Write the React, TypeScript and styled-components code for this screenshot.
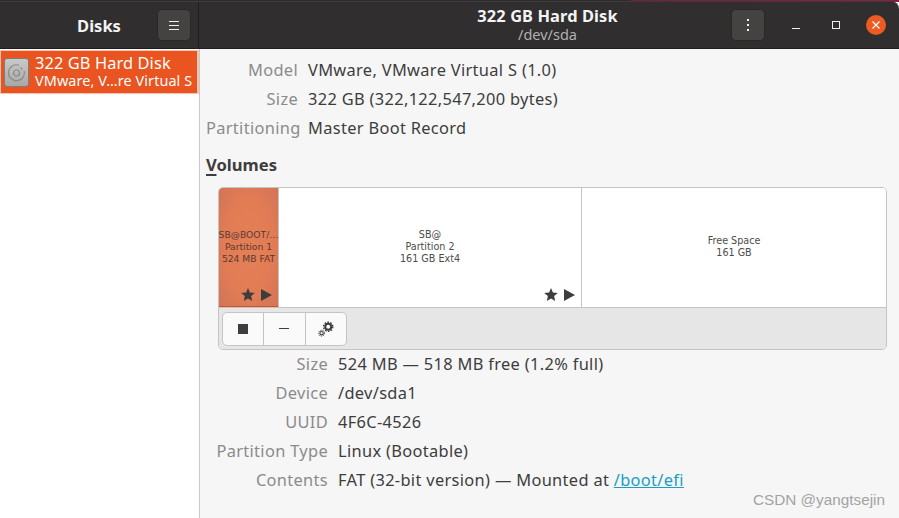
import React from "react";
import styled, { createGlobalStyle } from "styled-components";

const Global = createGlobalStyle`
  html, body {
    margin: 0;
    padding: 0;
    width: 899px;
    height: 518px;
    overflow: hidden;
    background: #f6f6f6;
    font-family: "Noto Sans", "Open Sans", sans-serif;
  }
`;

const Window = styled.div`
  position: relative;
  width: 899px;
  height: 518px;
  display: flex;
  flex-direction: column;
  background: #f6f6f6;
  overflow: hidden;
`;

const Strip = styled.div`
  height: 2px;
  background: linear-gradient(90deg, #2d2b2b 0, #2d2b2b 630px, #7a1c3d 632px, #8d1e45 100%);
  flex: none;
`;

const HeaderBar = styled.div`
  height: 46px;
  flex: none;
  display: flex;
  background: #302e2e;
  border-top: 1px solid #3c3a3a;
  border-radius: 0 8px 0 0;
  margin-top: -1px;
  border-bottom: 1px solid #1f1e1e;
  box-sizing: content-box;
`;

const SideHead = styled.div`
  width: 199px;
  flex: none;
  display: grid;
  grid-template-columns: 1fr auto 1fr;
  align-items: center;
  padding: 0 7px 0 0;
  box-sizing: border-box;
  border-right: 1px solid #1f1e1e;
`;

const SideTitle = styled.div`
  grid-column: 2;
  padding-left: 7px;
  color: #f4f4f4;
  font-size: 16.5px;
  font-weight: 700;
`;

const SideActions = styled.div`
  grid-column: 3;
  display: flex;
  justify-content: flex-end;
`;

const MainHead = styled.div`
  flex: 1;
  display: grid;
  grid-template-columns: 1fr auto 1fr;
  align-items: center;
  padding-right: 3px;
`;

const TitleBlock = styled.div`
  grid-column: 2;
  display: flex;
  flex-direction: column;
  align-items: center;
  line-height: 18px;
`;

const TitleMain = styled.div`
  color: #f4f4f4;
  font-size: 16.4px;
  font-weight: 700;
  letter-spacing: 0.1px;
`;

const TitleSub = styled.div`
  color: #b2b1b0;
  font-size: 14.5px;
`;

const MainActions = styled.div`
  grid-column: 3;
  display: flex;
  align-items: center;
  justify-content: flex-end;
`;

const HeadButton = styled.div`
  width: 34px;
  height: 32px;
  display: flex;
  align-items: center;
  justify-content: center;
  background: #454342;
  border: 1px solid #292828;
  border-radius: 5px;
  box-sizing: border-box;
`;

const WinControls = styled.div`
  display: flex;
  align-items: center;
  margin-left: 11px;
`;

const WinButton = styled.div`
  width: 40px;
  height: 24px;
  display: flex;
  align-items: center;
  justify-content: center;
`;

const CloseCircle = styled.div`
  width: 20px;
  height: 20px;
  border-radius: 50%;
  background: #ed5a24;
  display: flex;
  align-items: center;
  justify-content: center;
`;

const Body = styled.div`
  flex: 1;
  display: flex;
  min-height: 0;
`;

const Sidebar = styled.div`
  width: 200px;
  flex: none;
  background: #ffffff;
  border-right: 1px solid #c8c8c8;
  box-sizing: border-box;
`;

const DiskRow = styled.div`
  height: 44px;
  margin-top: 1px;
  box-sizing: border-box;
  background: #e95420;
  border: 1px solid #f6c4b0;
  border-width: 1px 2px 1px 1px;
  display: flex;
  align-items: center;
  padding-left: 3px;
  gap: 6px;
  color: #ffffff;
`;

const DiskIcon = styled.div`
  width: 25px;
  height: 29px;
  flex: none;
  display: flex;
  align-items: center;
  justify-content: center;
  background: linear-gradient(#c9c9c7, #a8a8a6);
  border: 1px solid #7d7d7b;
  border-radius: 3px;
  box-sizing: border-box;
`;

const DiskText = styled.div`
  display: flex;
  flex-direction: column;
  min-width: 0;
  padding-bottom: 1px;
`;

const DiskName = styled.div`
  font-size: 16.4px;
  letter-spacing: 0.1px;
  line-height: 20px;
  white-space: nowrap;
`;

const DiskSub = styled.div`
  margin-top: -1px;
  font-size: 14.4px;
  letter-spacing: 0.1px;
  line-height: 18px;
  white-space: nowrap;
`;

const Main = styled.div`
  flex: 1;
  min-width: 0;
  display: flex;
  flex-direction: column;
  padding: 6px 12px 0 6px;
`;

const InfoGrid = styled.div<{ $labelWidth: number }>`
  display: grid;
  grid-template-columns: ${(p) => p.$labelWidth}px 1fr;
  column-gap: 10px;
  grid-auto-rows: 29px;
  align-items: center;
  font-size: 16.4px;
  letter-spacing: 0.33px;
`;

const Label = styled.div`
  text-align: right;
  color: #8b8b8b;
  white-space: nowrap;
`;

const Value = styled.div`
  color: #3d3d3d;
  white-space: nowrap;
`;

const FileLink = styled.a`
  color: #17a0c4;
  text-decoration: underline;
`;

const Heading = styled.div`
  margin-top: 11px;
  height: 24px;
  line-height: 24px;
  font-size: 16.6px;
  font-weight: 700;
  color: #3d3d3d;
  u {
    text-decoration-thickness: 2px;
    text-underline-offset: 3px;
  }
`;

const VolumesBox = styled.div`
  margin: 10px 0 0 12px;
  height: 163px;
  flex: none;
  display: flex;
  flex-direction: column;
  box-sizing: border-box;
  border: 1px solid #c4c4c4;
  border-radius: 5px;
  background: #ffffff;
  overflow: hidden;
`;

const Bars = styled.div`
  height: 119px;
  flex: none;
  display: flex;
  border-bottom: 1px solid #c4c4c4;
  box-sizing: content-box;
`;

const Part = styled.div<{ $width: number; $selected?: boolean }>`
  position: relative;
  width: ${(p) => p.$width}px;
  flex: ${(p) => (p.$width ? "none" : "1")};
  box-sizing: border-box;
  display: flex;
  flex-direction: column;
  align-items: center;
  justify-content: center;
  text-align: center;
  border-right: ${(p) => (p.$width ? "1px solid #c4c4c4" : "none")};
  font-family: "DejaVu Sans", sans-serif;
  font-size: ${(p) => (p.$selected ? 9.2 : 9.6)}px;
  line-height: 12px;
  color: ${(p) => (p.$selected ? "#5a3a30" : "#4c4c4c")};
  background: ${(p) =>
    p.$selected
      ? "radial-gradient(ellipse at center, #e57f58 0%, #e27c55 55%, #d27456 100%)"
      : "#ffffff"};
  box-shadow: ${(p) => (p.$selected ? "inset 0 -1px 0 #d9501f" : "none")};
  overflow: hidden;
  white-space: nowrap;
`;

const PartLabel = styled.div`
  margin-top: -2px;
`;

const PartMarks = styled.div`
  position: absolute;
  right: 6px;
  bottom: 6px;
  display: flex;
  align-items: center;
  gap: 6px;
`;

const ToolStrip = styled.div`
  flex: 1;
  display: flex;
  align-items: center;
  padding-left: 3px;
  background: #e6e6e6;
`;

const ToolGroup = styled.div`
  display: flex;
  width: 125px;
  height: 34px;
  box-sizing: border-box;
  border: 1px solid #c4c4c4;
  border-radius: 5px;
  background: #fafafa;
  overflow: hidden;
`;

const ToolButton = styled.div`
  flex: 1;
  display: flex;
  align-items: center;
  justify-content: center;
  box-sizing: border-box;
  & + & {
    border-left: 1px solid #c4c4c4;
  }
`;

const Details = styled.div`
  margin-top: -1px;
`;

const Watermark = styled.div`
  position: absolute;
  right: 14px;
  bottom: 9px;
  font-family: "Liberation Sans", sans-serif;
  font-size: 15.3px;
  color: #a3a3a3;
`;

const Star = () => (
  <svg width="14" height="13" viewBox="0 0 14 13">
    <path d="M7 0l1.9 4.5 4.9.4-3.7 3.2 1.1 4.8L7 10.4 2.8 12.9l1.1-4.8L.2 4.9l4.9-.4z" fill="#3d3d3d" />
  </svg>
);

const Play = () => (
  <svg width="11" height="12" viewBox="0 0 11 12">
    <path d="M0 0l11 6-11 6z" fill="#3d3d3d" />
  </svg>
);

const Marks = () => (
  <PartMarks>
    <Star />
    <Play />
  </PartMarks>
);

const Gears = () => (
  <svg width="16" height="16" viewBox="0 0 16 16" fill="none" stroke="#3d3d3d">
    <circle cx="10.2" cy="5.8" r="3" strokeWidth="2" />
    <circle cx="10.2" cy="5.8" r="4.6" strokeWidth="1.4" strokeDasharray="1.6 1.3" />
    <circle cx="3.6" cy="12.2" r="1.7" strokeWidth="1.1" />
    <circle cx="3.6" cy="12.2" r="3" strokeWidth="1" strokeDasharray="1.1 1" />
  </svg>
);

const Disc = () => (
  <svg width="19" height="19" viewBox="0 0 19 19" fill="none" stroke="#8a8a88" strokeWidth="1.2">
    <path d="M12 2.2A8 8 0 1 0 17.3 8" />
    <circle cx="9.5" cy="10" r="3" />
    <path d="M13.5 4.5a6 6 0 0 1 1.6 2" />
  </svg>
);

export default function App() {
  return (
    <Window>
      <Global />
      <Strip />
      <HeaderBar>
        <SideHead>
          <SideTitle>Disks</SideTitle>
          <SideActions>
            <HeadButton>
              <svg width="10" height="10" viewBox="0 0 10 10" stroke="#f0f0f0" strokeWidth="1">
                <path d="M0 1.5h10M0 5.5h10M0 9.5h10" />
              </svg>
            </HeadButton>
          </SideActions>
        </SideHead>
        <MainHead>
          <TitleBlock>
            <TitleMain>322 GB Hard Disk</TitleMain>
            <TitleSub>/dev/sda</TitleSub>
          </TitleBlock>
          <MainActions>
            <HeadButton>
              <svg width="4" height="12" viewBox="0 0 4 12" fill="#f0f0f0">
                <rect x="1" y="0" width="2" height="2" />
                <rect x="1" y="5" width="2" height="2" />
                <rect x="1" y="10" width="2" height="2" />
              </svg>
            </HeadButton>
            <WinControls>
              <WinButton>
                <svg width="8" height="8" viewBox="0 0 8 8" stroke="#f0f0f0" strokeWidth="1">
                  <path d="M0 7.5h8" />
                </svg>
              </WinButton>
              <WinButton>
                <svg width="8" height="8" viewBox="0 0 8 8" fill="none" stroke="#f0f0f0" strokeWidth="1">
                  <rect x="0.5" y="0.5" width="7" height="7" />
                </svg>
              </WinButton>
              <WinButton>
                <CloseCircle>
                  <svg width="8" height="8" viewBox="0 0 8 8" stroke="#ffffff" strokeWidth="1.2">
                    <path d="M0.5 0.5l7 7M7.5 0.5l-7 7" />
                  </svg>
                </CloseCircle>
              </WinButton>
            </WinControls>
          </MainActions>
        </MainHead>
      </HeaderBar>
      <Body>
        <Sidebar>
          <DiskRow>
            <DiskIcon>
              <Disc />
            </DiskIcon>
            <DiskText>
              <DiskName>322 GB Hard Disk</DiskName>
              <DiskSub>VMware, V…re Virtual S</DiskSub>
            </DiskText>
          </DiskRow>
        </Sidebar>
        <Main>
          <InfoGrid $labelWidth={92}>
            <Label>Model</Label>
            <Value>VMware, VMware Virtual S (1.0)</Value>
            <Label>Size</Label>
            <Value>322 GB (322,122,547,200 bytes)</Value>
            <Label>Partitioning</Label>
            <Value>Master Boot Record</Value>
          </InfoGrid>
          <Heading>
            <u>V</u>olumes
          </Heading>
          <VolumesBox>
            <Bars>
              <Part $width={60} $selected>
                <PartLabel>
                  SB@BOOT/…
                  <br />
                  Partition 1
                  <br />
                  524 MB FAT
                </PartLabel>
                <Marks />
              </Part>
              <Part $width={303}>
                <PartLabel>
                  SB@
                  <br />
                  Partition 2
                  <br />
                  161 GB Ext4
                </PartLabel>
                <Marks />
              </Part>
              <Part $width={0}>
                <PartLabel>
                  Free Space
                  <br />
                  161 GB
                </PartLabel>
              </Part>
            </Bars>
            <ToolStrip>
              <ToolGroup>
                <ToolButton>
                  <svg width="10" height="10" viewBox="0 0 10 10">
                    <rect width="10" height="10" fill="#3d3d3d" />
                  </svg>
                </ToolButton>
                <ToolButton>
                  <svg width="10" height="1" viewBox="0 0 10 1">
                    <rect width="10" height="1" fill="#3d3d3d" />
                  </svg>
                </ToolButton>
                <ToolButton>
                  <Gears />
                </ToolButton>
              </ToolGroup>
            </ToolStrip>
          </VolumesBox>
          <Details>
            <InfoGrid $labelWidth={122}>
              <Label>Size</Label>
              <Value>524 MB — 518 MB free (1.2% full)</Value>
              <Label>Device</Label>
              <Value>/dev/sda1</Value>
              <Label>UUID</Label>
              <Value>4F6C-4526</Value>
              <Label>Partition Type</Label>
              <Value>Linux (Bootable)</Value>
              <Label>Contents</Label>
              <Value>
                FAT (32-bit version) — Mounted at <FileLink>/boot/efi</FileLink>
              </Value>
            </InfoGrid>
          </Details>
        </Main>
      </Body>
      <Watermark>CSDN @yangtsejin</Watermark>
    </Window>
  );
}
